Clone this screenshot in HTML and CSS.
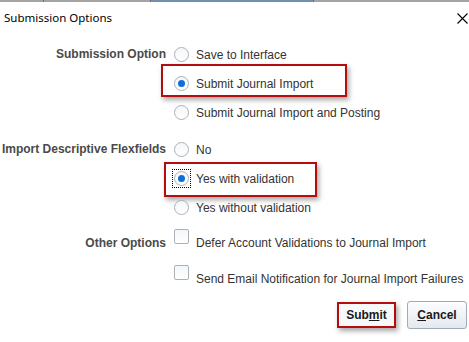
FILE: index.html
```html
<!DOCTYPE html>
<html lang="en">
<head>
  <meta charset="UTF-8">
  <meta name="viewport" content="width=device-width, initial-scale=1.0">
  <title>Submission Options</title>
  <link rel="stylesheet" href="styles.css">
</head>
<body>
  <div class="tabs">
    <span class="tab tab-first"></span>
    <span class="tab tab-second"></span>
    <span class="tab tab-active"></span>
    <span class="tab tab-rest"></span>
  </div>

  <div class="dialog">
    <div class="header">
      <span class="title">Submission Options</span>
      <svg class="close" width="11" height="11" viewBox="0 0 11 11">
        <path d="M0.5 0.5 L10.5 10.5 M10.5 0.5 L0.5 10.5" stroke="#000" stroke-width="1.1" fill="none"/>
      </svg>
    </div>

    <div class="form">
      <div class="label">Submission Option</div>
      <div class="options">
        <div class="option"><span class="radio"></span>Save to Interface</div>
        <div class="option marked mark-one"><span class="radio checked"></span>Submit Journal Import</div>
        <div class="option"><span class="radio"></span>Submit Journal Import and Posting</div>
      </div>

      <div class="label group">Import Descriptive Flexfields</div>
      <div class="options group">
        <div class="option"><span class="radio"></span>No</div>
        <div class="option marked mark-two"><span class="radio checked focused"></span>Yes with validation</div>
        <div class="option"><span class="radio"></span>Yes without validation</div>
      </div>

      <div class="label group checks-label">Other Options</div>
      <div class="options group checks">
        <div class="check-row"><span class="checkbox"></span><span class="check-text">Defer Account Validations to Journal Import</span></div>
        <div class="check-row"><span class="checkbox"></span><span class="check-text">Send Email Notification for Journal Import Failures</span></div>
      </div>
    </div>

    <div class="buttons">
      <button class="btn btn-submit">Sub<u>m</u>it</button>
      <button class="btn"><u>C</u>ancel</button>
    </div>
  </div>
</body>
</html>
```

FILE: styles.css
```css
body {
  margin: 0;
  width: 469px;
  height: 342px;
  background-color: #fff;
  font-family: "Liberation Sans", Arial, sans-serif;
  font-size: 12px;
  color: #333;
  overflow: hidden;
}

.tabs {
  display: flex;
  height: 2px;
}

.tab {
  height: 2px;
  background-color: #a3a3a3;
  border-right: 1px solid #6e6e6e;
}

.tab-first {
  width: 43px;
}

.tab-second {
  width: 106px;
}

.tab-active {
  width: 162px;
  background-color: #7191b1;
}

.tab-rest {
  flex: 1;
  border-right: none;
}

.header {
  display: flex;
  justify-content: space-between;
  align-items: center;
  height: 31px;
  padding: 0 1px 0 4px;
}

.title {
  font-family: "Noto Sans", "Open Sans", sans-serif;
  font-size: 11.5px;
  color: #000;
}

.close {
  margin-top: 2px;
}

.form {
  display: grid;
  grid-template-columns: 166px 1fr;
  margin-top: 7px;
}

.label {
  text-align: right;
  font-weight: bold;
  color: #4a4a4a;
  line-height: 29px;
}

.group {
  margin-top: 8px;
}

.options {
  display: flex;
  flex-direction: column;
}

.option {
  position: relative;
  display: flex;
  align-items: center;
  height: 29px;
}

.radio {
  position: relative;
  box-sizing: border-box;
  width: 15px;
  height: 15px;
  margin: 0 7px 0 8px;
  border: 1px solid #a9b1ba;
  border-radius: 50%;
  background: linear-gradient(#f4f6f8, #fff);
}

.radio.checked::after {
  content: "";
  position: absolute;
  left: 3px;
  top: 3px;
  width: 7px;
  height: 7px;
  border-radius: 50%;
  background-color: #0f6fd6;
}

.radio.focused::before {
  content: "";
  position: absolute;
  left: -3px;
  top: -3px;
  width: 17px;
  height: 17px;
  border: 1px dotted #000;
}

.marked::before {
  content: "";
  position: absolute;
  border: 2px solid #b50d0d;
  box-shadow: 2px 3px 5px rgba(0, 0, 0, 0.35);
}

.mark-one::before {
  left: -5px;
  top: -5px;
  width: 182px;
  height: 29px;
}

.mark-two::before {
  left: -2px;
  top: -2px;
  width: 149px;
  height: 31px;
}

.checks-label {
  margin-top: 7px;
  line-height: 14px;
  padding-top: 7px;
}

.checks {
  margin-top: 7px;
}

.check-row {
  display: flex;
  align-items: flex-start;
  height: 36px;
}

.checkbox {
  box-sizing: border-box;
  width: 15px;
  height: 15px;
  margin: 0 7px 0 8px;
  border: 1px solid #a9b1ba;
  border-radius: 2px;
  background: linear-gradient(#f4f6f8, #fff);
}

.check-text {
  line-height: 14px;
  padding-top: 7px;
}

.buttons {
  display: flex;
  justify-content: flex-end;
  gap: 11px;
  padding-right: 2px;
}

.btn {
  box-sizing: border-box;
  width: 60px;
  height: 28px;
  padding: 0;
  font-family: "Liberation Sans", Arial, sans-serif;
  font-size: 12px;
  font-weight: bold;
  color: #1a1a1a;
  border: 1px solid #9eacba;
  border-radius: 3px;
  background: linear-gradient(#fdfdfe, #e4e9ee);
}

.btn-submit {
  width: 59px;
  height: 26px;
  margin-top: 1px;
  border: 2px solid #b50d0d;
  border-radius: 0;
  background: #f7f8f9;
  box-shadow: 2px 3px 5px rgba(0, 0, 0, 0.35);
}
```
